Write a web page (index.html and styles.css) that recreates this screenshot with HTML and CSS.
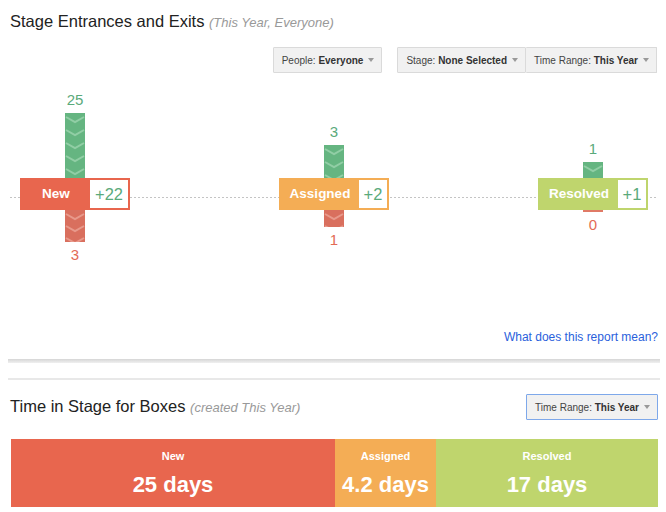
FILE: index.html
```html
<!DOCTYPE html>
<html>
<head>
<meta charset="utf-8">
<link rel="stylesheet" href="styles.css">
</head>
<body>
<svg class="defs" width="0" height="0" aria-hidden="true">
  <defs>
    <pattern id="chev-in" width="20" height="13" patternUnits="userSpaceOnUse">
      <polyline points="1,4 10,9 19,4" fill="none" stroke="#91cea5" stroke-width="2"/>
    </pattern>
    <pattern id="chev-out" width="20" height="12" patternUnits="userSpaceOnUse">
      <polyline points="1,4 10,9 19,4" fill="none" stroke="#e8998b" stroke-width="2"/>
    </pattern>
  </defs>
</svg>
<div class="page">
  <section class="report">
    <h2 class="title">Stage Entrances and Exits <span class="sub">(This Year, Everyone)</span></h2>
    <div class="filters">
      <button class="dd">People:&nbsp;<b>Everyone</b><i class="caret"></i></button>
      <div class="group">
        <button class="dd">Stage:&nbsp;<b>None Selected</b><i class="caret"></i></button>
        <button class="dd">Time Range:&nbsp;<b>This Year</b><i class="caret"></i></button>
      </div>
    </div>
    <div class="chart">
      <div class="stage">
        <div class="top">
          <span class="num in">25</span>
          <svg class="bar" width="20" height="65"><rect width="20" height="65" fill="#65b581"/><rect width="20" height="65" fill="url(#chev-in)"/></svg>
        </div>
        <div class="box new"><span class="label">New</span><span class="delta wide">+22</span></div>
        <div class="bottom">
          <svg class="bar" width="20" height="32"><rect width="20" height="32" fill="#d96f5e"/><rect width="20" height="32" fill="url(#chev-out)"/></svg>
          <span class="num out">3</span>
        </div>
      </div>
      <div class="stage">
        <div class="top">
          <span class="num in">3</span>
          <svg class="bar" width="20" height="33"><rect width="20" height="33" fill="#65b581"/><rect width="20" height="33" fill="url(#chev-in)"/></svg>
        </div>
        <div class="box assigned"><span class="label">Assigned</span><span class="delta">+2</span></div>
        <div class="bottom">
          <svg class="bar" width="20" height="17"><rect width="20" height="17" fill="#d96f5e"/><rect width="20" height="17" fill="url(#chev-out)"/></svg>
          <span class="num out">1</span>
        </div>
      </div>
      <div class="stage">
        <div class="top">
          <span class="num in">1</span>
          <svg class="bar" width="20" height="16"><rect width="20" height="16" fill="#65b581"/><rect width="20" height="16" fill="url(#chev-in)"/></svg>
        </div>
        <div class="box resolved"><span class="label">Resolved</span><span class="delta">+1</span></div>
        <div class="bottom">
          <svg class="bar" width="20" height="2"><rect width="20" height="2" fill="#e07a66"/></svg>
          <span class="num out">0</span>
        </div>
      </div>
    </div>
    <div class="help"><a href="#">What does this report mean?</a></div>
  </section>
  <div class="sep"></div>
  <div class="rule"></div>
  <section class="time">
    <div class="head">
      <h2 class="title">Time in Stage for Boxes <span class="sub">(created This Year)</span></h2>
      <button class="dd focus">Time Range:&nbsp;<b>This Year</b><i class="caret"></i></button>
    </div>
    <div class="bars">
      <div class="cell c-new" style="width:324px"><div class="cell-label">New</div><div class="cell-value">25 days</div></div>
      <div class="cell c-assigned" style="width:101px"><div class="cell-label">Assigned</div><div class="cell-value">4.2 days</div></div>
      <div class="cell c-resolved" style="width:222px"><div class="cell-label">Resolved</div><div class="cell-value">17 days</div></div>
    </div>
  </section>
</div>
</body>
</html>
```
FILE: styles.css
```css
html, body {
  margin: 0;
  padding: 0;
  background: #fff;
}
body {
  font-family: "Liberation Sans", Arial, sans-serif;
  color: #222;
}
.defs {
  position: absolute;
  width: 0;
  height: 0;
}
.page {
  width: 666px;
  box-sizing: border-box;
  padding: 0 8px 0 10px;
}
.title {
  margin: 0;
  padding-top: 11px;
  font-size: 16.5px;
  line-height: 20px;
  font-weight: normal;
  color: #222;
}
.sub {
  font-size: 13px;
  font-style: italic;
  color: #999;
}
.filters {
  margin-top: 14px;
  display: flex;
  justify-content: flex-end;
  gap: 15px;
  padding-right: 1px;
}
.group {
  display: flex;
}
.group .dd + .dd {
  border-left: none;
}
.dd {
  height: 26px;
  box-sizing: border-box;
  display: inline-flex;
  align-items: center;
  margin: 0;
  padding: 0 7px 0 8px;
  border: 1px solid #dadada;
  border-radius: 1px;
  background: #f1f1f1;
  font-family: "Liberation Sans", Arial, sans-serif;
  font-size: 10px;
  color: #444;
  white-space: nowrap;
}
.dd b {
  color: #333;
}
.dd.focus {
  border-color: #7ea8ea;
}
.caret {
  display: inline-block;
  width: 0;
  height: 0;
  margin-left: 5px;
  border-left: 3px solid transparent;
  border-right: 3px solid transparent;
  border-top: 4px solid #999;
}
.chart {
  margin-top: 12px;
  height: 185px;
  padding: 0 10px;
  display: flex;
  justify-content: space-between;
  align-items: flex-start;
  background-image: repeating-linear-gradient(to right, #c4c4c4 0 2px, transparent 2px 4px);
  background-size: 100% 1px;
  background-position: 0 112px;
  background-repeat: no-repeat;
}
.stage {
  width: 110px;
  display: flex;
  flex-direction: column;
  align-items: center;
}
.top {
  height: 93px;
  display: flex;
  flex-direction: column;
  justify-content: flex-end;
  align-items: center;
}
.bottom {
  display: flex;
  flex-direction: column;
  align-items: center;
}
.bar {
  display: block;
}
.num {
  font-size: 15px;
  line-height: 18px;
}
.num.in {
  color: #5aaa7b;
  margin-bottom: 4px;
}
.num.out {
  color: #e36b55;
  margin-top: 4px;
}
.box {
  width: 110px;
  height: 32px;
  box-sizing: border-box;
  display: flex;
  border: 2px solid;
}
.box.new { background: #e8664e; border-color: #e8664e; }
.box.assigned { background: #f4ad55; border-color: #f4ad55; }
.box.resolved { background: #bfd56d; border-color: #bfd56d; }
.label {
  flex: 1;
  text-align: center;
  color: #fff;
  font-weight: bold;
  font-size: 13.5px;
  line-height: 28px;
}
.delta {
  width: 28px;
  background: #fff;
  text-align: center;
  font-size: 16.5px;
  line-height: 28px;
  color: #5aaa7b;
}
.delta.wide {
  width: 38px;
}
.help {
  margin-top: 59px;
  text-align: right;
  font-size: 12px;
  line-height: 16px;
}
.help a {
  color: #2a5fdc;
  text-decoration: none;
}
.sep {
  margin: 14px -2px 0 -2px;
  height: 4px;
  background: linear-gradient(#d6d6d6, #f0f0f0);
}
.rule {
  margin: 15px -2px 0 -2px;
  height: 2px;
  background: #e8e8e8;
}
.head {
  margin-top: 14px;
  height: 26px;
  display: flex;
  justify-content: space-between;
  align-items: center;
}
.head .title {
  padding-top: 0;
}
.bars {
  margin-top: 19px;
  margin-left: 1px;
  display: flex;
  height: 68px;
}
.cell {
  box-sizing: border-box;
  padding-top: 10px;
  text-align: center;
  color: #fff;
}
.c-new { background: #e8664e; }
.c-assigned { background: #f4ad55; }
.c-resolved { background: #bfd56d; }
.cell-label {
  font-size: 11px;
  font-weight: bold;
  line-height: 14px;
}
.cell-value {
  margin-top: 9px;
  font-size: 22px;
  font-weight: bold;
  line-height: 26px;
  white-space: nowrap;
}
```
